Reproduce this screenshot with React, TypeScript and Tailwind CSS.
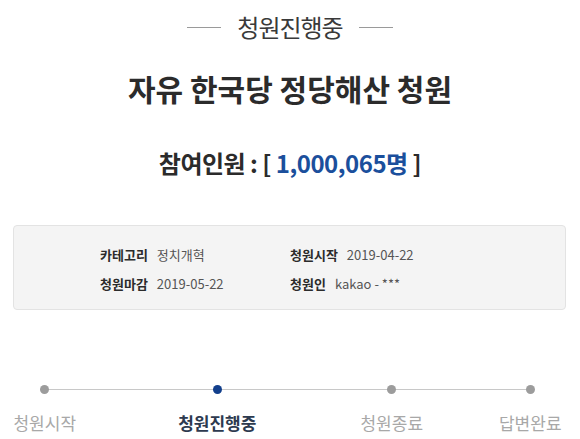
import React from "react";

const steps = [
  { label: "청원시작", active: false, gap: "ml-[-5px]" },
  { label: "청원진행중", active: true, gap: "ml-[73px]" },
  { label: "청원종료", active: false, gap: "ml-[75px]" },
  { label: "답변완료", active: false, gap: "ml-[39px]" },
];

const info = [
  { label: "카테고리", value: "정치개혁" },
  { label: "청원시작", value: "2019-04-22" },
  { label: "청원마감", value: "2019-05-22" },
  { label: "청원인", value: "kakao - ***" },
];

const App: React.FC = () => {
  return (
    <div
      className="w-[580px] h-[439px] overflow-hidden bg-white"
      style={{ fontFamily: '"Noto Sans CJK KR", "Noto Sans", sans-serif' }}
    >
      {/* status heading */}
      <div className="flex items-center justify-center gap-[16px] pt-[11px] h-[43px]">
        <span className="w-[34px] h-px bg-[#9a9a9a]" />
        <span className="text-[24px] leading-[30px] text-[#3a3a3a] tracking-[-1px]">청원진행중</span>
        <span className="w-[34px] h-px bg-[#9a9a9a]" />
      </div>

      <h1 className="mt-[28px] text-center text-[30px] leading-[34px] font-bold text-[#2b2b2b]">
        자유 한국당 정당해산 청원
      </h1>

      <p className="mt-[44px] text-center text-[24px] leading-[28px] font-bold text-[#2b2b2b] tracking-[-0.5px]">
        참여인원 : [ <span className="text-[#1b4f9c]">1,000,065명</span> ]
      </p>

      {/* info box */}
      <div className="mt-[48px] ml-[13px] w-[553px] h-[85px] rounded-[4px] border border-[#e3e3e3] bg-[#f4f4f4] pl-[86px] pt-[20px]">
        <div className="grid grid-cols-[190px_1fr] gap-y-[12px] text-[13px] leading-[17px]">
          {info.map((item) => (
            <div key={item.label} className="flex gap-[9px]">
              <span className="font-bold text-[#2b2b2b]">{item.label}</span>
              <span className="text-[#555]">{item.value}</span>
            </div>
          ))}
        </div>
      </div>

      {/* progress steps */}
      <div className="relative mt-[75px]">
        <div className="absolute left-[45px] w-[487px] top-[4px] h-px bg-[#c8c8c8]" />
        <div className="relative flex">
          {steps.map((s) => (
            <div key={s.label} className={`${s.gap} w-[100px] flex flex-col items-center`}>
              <span
                className={`w-[9px] h-[9px] rounded-full ${s.active ? "bg-[#123f8c]" : "bg-[#9c9c9c]"}`}
              />
              <span
                className={`mt-[18px] text-[17px] leading-[22px] whitespace-nowrap ${
                  s.active ? "font-bold text-[#2d3a4f]" : "text-[#a8a8a8]"
                }`}
              >
                {s.label}
              </span>
            </div>
          ))}
        </div>
      </div>
    </div>
  );
};

export default App;
